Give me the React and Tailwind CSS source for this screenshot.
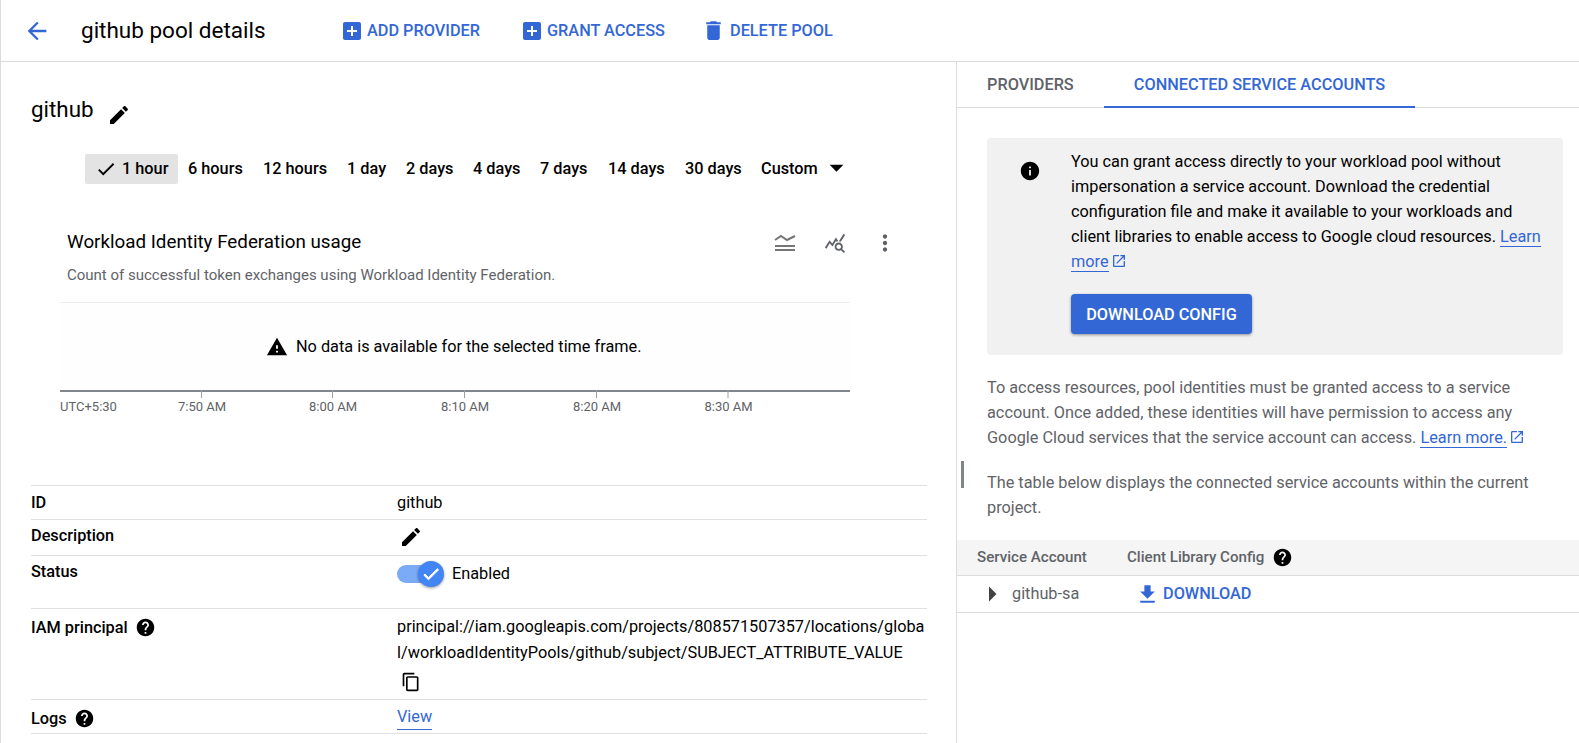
import React from "react";

const P = {
  back: "M20 11H7.83l5.59-5.59L12 4l-8 8 8 8 1.41-1.41L7.83 13H20v-2z",
  add: "M19 3H5c-1.11 0-2 .9-2 2v14c0 1.1.89 2 2 2h14c1.1 0 2-.9 2-2V5c0-1.1-.9-2-2-2zm-2 10h-4v4h-2v-4H7v-2h4V7h2v4h4v2z",
  del: "M6 19c0 1.1.9 2 2 2h8c1.1 0 2-.9 2-2V7H6v12zM19 4h-3.5l-1-1h-5l-1 1H5v2h14V4z",
  edit: "M3 17.25V21h3.75L17.81 9.94l-3.75-3.75L3 17.25zM20.71 7.04c.39-.39.39-1.02 0-1.41l-2.34-2.34c-.39-.39-1.02-.39-1.41 0l-1.83 1.83 3.75 3.75 1.83-1.83z",
  check: "M9 16.17L4.83 12l-1.42 1.41L9 19 21 7l-1.41-1.41z",
  drop: "M7 10l5 5 5-5z",
  more: "M12 8c1.1 0 2-.9 2-2s-.9-2-2-2-2 .9-2 2 .9 2 2 2zm0 2c-1.1 0-2 .9-2 2s.9 2 2 2 2-.9 2-2-.9-2-2-2zm0 6c-1.1 0-2 .9-2 2s.9 2 2 2 2-.9 2-2-.9-2-2-2z",
  warn: "M1 21h22L12 2 1 21zm12-3h-2v-2h2v2zm0-4h-2v-4h2v4z",
  help: "M12 2C6.48 2 2 6.48 2 12s4.48 10 10 10 10-4.48 10-10S17.52 2 12 2zm1 17h-2v-2h2v2zm2.07-7.75l-.9.92C13.45 12.9 13 13.5 13 15h-2v-.5c0-1.1.45-2.1 1.17-2.83l1.24-1.26c.37-.36.59-.86.59-1.41 0-1.1-.9-2-2-2s-2 .9-2 2H8c0-2.21 1.79-4 4-4s4 1.79 4 4c0 .88-.36 1.68-.93 2.25z",
  info: "M12 2C6.48 2 2 6.48 2 12s4.48 10 10 10 10-4.48 10-10S17.52 2 12 2zm1 15h-2v-6h2v6zm0-8h-2V7h2v2z",
  copy: "M16 1H4c-1.1 0-2 .9-2 2v14h2V3h12V1zm3 4H8c-1.1 0-2 .9-2 2v14c0 1.1.9 2 2 2h11c1.1 0 2-.9 2-2V7c0-1.1-.9-2-2-2zm0 16H8V7h11v14z",
  open: "M19 19H5V5h7V3H5c-1.11 0-2 .9-2 2v14c0 1.1.89 2 2 2h14c1.1 0 2-.9 2-2v-7h-2v7zM14 3v2h3.59l-9.83 9.83 1.41 1.41L19 6.41V10h2V3h-7z",
  dl: "M19 9h-4V3H9v6H5l7 7 7-7zM5 18v2h14v-2H5z",
  right: "M10 17l5-5-5-5v10z",
  query: "M19.88 18.47c.44-.7.7-1.51.7-2.39 0-2.49-2.01-4.5-4.5-4.5s-4.5 2.01-4.5 4.5 2.01 4.5 4.49 4.5c.88 0 1.7-.26 2.39-.7L21.58 23 23 21.58l-3.12-3.11zm-3.8.11c-1.38 0-2.5-1.12-2.5-2.5s1.12-2.5 2.5-2.5 2.5 1.12 2.5 2.5-1.12 2.5-2.5 2.5zm-.36-8.5c-.74.02-1.45.18-2.1.45l-.55-.83-3.8 6.18-3.01-3.52-3.63 5.81L1 17l5-8 3 3.5L13 6l2.72 4.08zm2.59.5c-.64-.28-1.33-.45-2.05-.49L21.38 2 23 3.18l-4.69 7.4z",
};

function I({ d, className }) {
  return (
    <svg viewBox="0 0 24 24" fill="currentColor" className={"shrink-0 " + className}>
      <path d={d} />
    </svg>
  );
}

const ranges = [
  ["6 hours", "w-[75px]"],
  ["12 hours", "w-[84px]"],
  ["1 day", "w-[59px]"],
  ["2 days", "w-[67px]"],
  ["4 days", "w-[67px]"],
  ["7 days", "w-[68px]"],
  ["14 days", "w-[77px]"],
  ["30 days", "w-[76px]"],
];

const ticks = [
  [202, "7:50 AM"],
  [333, "8:00 AM"],
  [465, "8:10 AM"],
  [597, "8:20 AM"],
  [728.5, "8:30 AM"],
];

function Chart() {
  return (
    <svg width="800" height="120" viewBox="0 0 800 120" className="block ml-[59px]" style={{ fontFamily: "Roboto, sans-serif" }}>
      <rect x="0" y="1" width="790" height="87" fill="#fefefe" />
      <rect x="0" y="0" width="790" height="1" fill="#eeeeee" />
      <rect x="0" y="88" width="790" height="2" fill="#80868b" />
      {ticks.map(([x]) => (
        <rect key={x} x={x - 61} y="88" width="1" height="8" fill="#9aa0a6" />
      ))}
      <text x="0" y="109" fontSize="13" fill="#5f6368">UTC+5:30</text>
      {ticks.map(([x, t]) => (
        <text key={t} x={x - 60} y="109" fontSize="13" fill="#5f6368" textAnchor="middle">{t}</text>
      ))}
    </svg>
  );
}

function Row({ label, help, h, labelTop, children, valueClass = "" }) {
  return (
    <div className={"flex border-b border-[#e0e0e0] " + h}>
      <div className={"w-[366px] shrink-0 flex items-start font-medium text-black " + labelTop}>
        <span className="leading-[25px]">{label}</span>
        {help && <I d={P.help} className="w-[21px] h-[21px] ml-[7px] mt-[2px] text-black" />}
      </div>
      <div className={"flex-1 min-w-0 " + valueClass}>{children}</div>
    </div>
  );
}

export default function App() {
  return (
    <div className="w-[1579px] h-[743px] overflow-hidden bg-white text-[#202124] text-[16.3px] border-l border-l-[#dadce0]" style={{ fontFamily: "Roboto, sans-serif" }}>
      <header className="h-[62px] flex items-center border-b border-[#dadce0] pl-[22px]">
        <I d={P.back} className="w-[28px] h-[28px] text-[#3367d6]" />
        <h1 className="ml-[30px] w-[259px] text-[22.5px] font-normal text-black">github pool details</h1>
        <div className="flex items-center w-[180px] text-[#3367d6] font-medium">
          <I d={P.add} className="w-[24px] h-[24px] mr-[3px]" />
          <span className="pt-[1px]">ADD PROVIDER</span>
        </div>
        <div className="flex items-center w-[181px] text-[#3367d6] font-medium">
          <I d={P.add} className="w-[24px] h-[24px] mr-[3px]" />
          <span className="pt-[1px]">GRANT ACCESS</span>
        </div>
        <div className="flex items-center text-[#3367d6] font-medium">
          <I d={P.del} className="w-[25px] h-[25px] mr-[4px]" />
          <span className="pt-[1px]">DELETE POOL</span>
        </div>
      </header>
      <div className="flex h-[681px]">
        <main className="w-[956px] shrink-0 border-r border-[#dadce0]">
          <div className="flex items-start pl-[30px] pt-[32px] h-[92px]">
            <span className="text-[22.4px] text-black leading-[30px]">github</span>
            <I d={P.edit} className="w-[24px] h-[24px] ml-[13px] mt-[9px] text-black" />
          </div>
          <div className="flex items-center ml-[84px] h-[30px] font-medium text-black">
            <div className="w-[93px] h-full flex items-center rounded-[2px] bg-[#e3e3e3] pl-[10px]">
              <I d={P.check} className="w-[22px] h-[22px] mr-[5px]" />
              <span>1 hour</span>
            </div>
            <div className="w-[10px]" />
            {ranges.map(([r, w]) => (
              <span key={r} className={w}>{r}</span>
            ))}
            <span>Custom</span>
            <I d={P.drop} className="w-[33px] h-[33px] ml-[2px] -mt-[3px]" />
          </div>
          <div className="pl-[66px] mt-[44px] flex items-center h-[28px]">
            <span className="text-[18.8px] w-[694px] text-black">Workload Identity Federation usage</span>
            <svg viewBox="0 0 24 24" className="w-[24px] h-[24px] ml-[12px] mt-[2px] text-[#757575] shrink-0" fill="none" stroke="currentColor" strokeWidth="2">
              <path d="M2 9l6-4 6 4 8-4" />
              <path d="M2 15h20M2 19h20" />
            </svg>
            <I d={P.query} className="w-[22px] h-[22px] ml-[27px] mt-[2px] text-[#5f6368]" />
            <I d={P.more} className="w-[26px] h-[26px] ml-[26px] mt-[2px] text-[#5f6368]" />
          </div>
          <div className="pl-[66px] mt-[9px] mb-[17px] h-[20px] text-[15px] leading-[20px] text-[#5f6368]">
            Count of successful token exchanges using Workload Identity Federation.
          </div>
          <div className="relative">
            <Chart />
            <div className="absolute left-[265px] top-[33px] flex items-center text-black">
              <I d={P.warn} className="w-[22px] h-[22px] mr-[8px]" />
              <span>No data is available for the selected time frame.</span>
            </div>
          </div>
          <div className="mt-[63px] ml-[30px] w-[896px] border-t border-[#e0e0e0]">
            <Row label="ID" h="h-[34px]" labelTop="pt-[4px]" valueClass="pt-[4px] leading-[25px] text-black">github</Row>
            <Row label="Description" h="h-[36px]" labelTop="pt-[3px]" valueClass="pt-[5px]">
              <I d={P.edit} className="w-[24px] h-[24px] ml-[2px] text-black" />
            </Row>
            <Row label="Status" h="h-[53px]" labelTop="pt-[3px]" valueClass="pt-[4px]">
              <div className="flex items-center h-[26px] mt-[1px]">
                <div className="relative w-[45px] h-[18px] mr-[10px]">
                  <div className="w-[36px] h-[18px] rounded-full bg-[#7baaf7]" />
                  <div className="absolute left-[21px] -top-[4px] w-[26px] h-[26px] rounded-full bg-[#4285f4] shadow-[0_1px_3px_rgba(0,0,0,0.4)] flex items-center justify-center text-white">
                    <I d={P.check} className="w-[20px] h-[20px] stroke-white stroke-[1.2px]" />
                  </div>
                </div>
                <span className="text-black">Enabled</span>
              </div>
            </Row>
            <Row label="IAM principal" help h="h-[91px]" labelTop="pt-[6px]" valueClass="pt-[5px] text-black leading-[26px]">
              <div className="break-all">principal://iam.googleapis.com/projects/808571507357/locations/global/workloadIdentityPools/github/subject/SUBJECT_ATTRIBUTE_VALUE</div>
              <I d={P.copy} className="w-[20px] h-[20px] mt-[6px] ml-[4px] text-black" />
            </Row>
            <Row label="Logs" help h="h-[34px]" labelTop="pt-[6px]" valueClass="pt-[4px] leading-[25px]">
              <span className="text-[#3367d6] border-b border-[#3367d6] inline-block leading-[24px]">View</span>
            </Row>
          </div>
        </main>
        <aside className="flex-1 min-w-0 relative text-[#5f6368]">
          <nav className="flex h-[46px] border-b border-[#dadce0] font-medium">
            <div className="w-[147px] pl-[30px] pt-[13px] leading-[20px]">PROVIDERS</div>
            <div className="w-[311px] h-[46px] border-b-2 border-[#3367d6] text-[#3367d6] text-center pt-[13px] leading-[20px]">CONNECTED SERVICE ACCOUNTS</div>
          </nav>
          <div className="pl-[30px] pr-[16px] pt-[30px]">
            <div className="flex h-[217px] rounded-[4px] bg-[#f1f1f1] text-black">
              <div className="w-[84px] shrink-0 pt-[22px] pl-[32px]">
                <I d={P.info} className="w-[22px] h-[22px]" />
              </div>
              <div className="flex-1 pt-[11px] leading-[25px] pr-[21px]">
                <p>
                  You can grant access directly to your workload pool without impersonation a service account. Download the credential configuration file and make it available to your workloads and client libraries to enable access to Google cloud resources.{" "}
                  <span className="text-[#3367d6] border-b border-[#3367d6]">Learn more</span>
                  <I d={P.open} className="inline-block w-[16px] h-[16px] ml-[2px] -mt-[3px] text-[#3367d6]" />
                </p>
                <div className="mt-[20px] w-[181px] h-[40px] rounded-[4px] bg-[#3367d6] text-white font-medium flex items-center justify-center shadow-[0_1px_3px_rgba(0,0,0,0.4)]">DOWNLOAD CONFIG</div>
              </div>
            </div>
            <p className="mt-[20px] leading-[25px] pr-[30px]">
              To access resources, pool identities must be granted access to a service account. Once added, these identities will have permission to access any Google Cloud services that the service account can access.{" "}
              <span className="text-[#3367d6] border-b border-[#3367d6]">Learn more.</span>
              <I d={P.open} className="inline-block w-[16px] h-[16px] ml-[2px] -mt-[3px] text-[#3367d6]" />
            </p>
            <p className="mt-[20px] leading-[25px] pr-[30px]">The table below displays the connected service accounts within the current project.</p>
          </div>
          <div className="mt-[20px] h-[36px] bg-[#f5f5f5] border-b border-[#dadce0] flex items-center text-[15.1px] font-medium">
            <span className="ml-[20px] w-[150px]">Service Account</span>
            <span>Client Library Config</span>
            <I d={P.help} className="w-[21px] h-[21px] ml-[8px] text-black" />
          </div>
          <div className="h-[37px] border-b border-[#dadce0] flex items-center">
            <I d={P.right} className="w-[36px] h-[36px] ml-[17px] -mr-[1px] text-[#424242]" />
            <span className="w-[124px] ml-[3px]">github-sa</span>
            <I d={P.dl} className="w-[25px] h-[25px] -ml-[1px] text-[#3367d6]" />
            <span className="text-[#3367d6] font-medium ml-[3px]">DOWNLOAD</span>
          </div>
          <div className="absolute left-[4px] top-[399px] w-[3px] h-[27px] bg-[#80868b]" />
        </aside>
      </div>
    </div>
  );
}
